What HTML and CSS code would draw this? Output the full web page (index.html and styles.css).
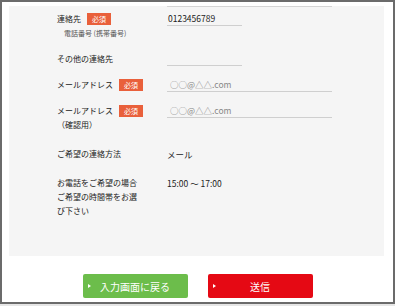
FILE: index.html
```html
<html>
<head>
    <title>お問い合わせ 確認</title>
    <link rel="stylesheet" href="styles.css">
</head>
<body>

<div class="frame">
    <div class="panel">
        <div class="prev-line"></div>

        <div class="row first">
            <div class="label">
                <div class="label-main">連絡先<span class="badge">必須</span></div>
                <div class="label-sub">電話番号 (携帯番号)</div>
            </div>
            <div class="value">
                <div class="field short">0123456789</div>
            </div>
        </div>

        <div class="row">
            <div class="label">
                <div class="label-main">その他の連絡先</div>
            </div>
            <div class="value">
                <div class="field short"></div>
            </div>
        </div>

        <div class="row">
            <div class="label">
                <div class="label-main">メールアドレス<span class="badge">必須</span></div>
            </div>
            <div class="value">
                <div class="field long placeholder">○○@△△.com</div>
            </div>
        </div>

        <div class="row">
            <div class="label">
                <div class="label-main">メールアドレス<span class="badge">必須</span></div>
                <div class="label-main">（確認用）</div>
            </div>
            <div class="value">
                <div class="field long placeholder">○○@△△.com</div>
            </div>
        </div>

        <div class="row wide">
            <div class="label">
                <div class="label-main">ご希望の連絡方法</div>
            </div>
            <div class="value">
                <div class="text">メール</div>
            </div>
        </div>

        <div class="row wide">
            <div class="label">
                <div class="label-main">お電話をご希望の場合<br>ご希望の時間帯をお選<br>び下さい</div>
            </div>
            <div class="value">
                <div class="text">15:00 〜 17:00</div>
            </div>
        </div>
    </div>

    <div class="actions">
        <button class="btn btn-back">入力画面に戻る</button>
        <button class="btn btn-send">送信</button>
    </div>
</div>

</body>
</html>
```

FILE: styles.css
```css
body {
    margin: 0;
    background-color: #e6e6e6;
    font-family: "Noto Sans CJK JP", "Noto Sans", sans-serif;
    color: #222;
}

.frame {
    background-color: #fff;
    border: 2px solid #6b6b6b;
    height: 300px;
    overflow: hidden;
}

.panel {
    background-color: #f5f5f5;
    margin: 4px 9px 0 7px;
    height: 250px;
    padding-left: 48px;
    box-sizing: border-box;
}

.prev-line {
    margin-left: 110px;
    width: 165px;
    height: 1px;
    background-color: #d4d4d4;
}

.row {
    display: grid;
    grid-template-columns: 110px 1fr;
    margin-top: 12px;
}

.row.first {
    margin-top: 5px;
}

.row.wide {
    margin-top: 15px;
}

.label-main {
    font-size: 8px;
    line-height: 14px;
    color: #222;
}

.label-sub {
    font-size: 7px;
    line-height: 14px;
    color: #555;
    padding-left: 7px;
}

.badge {
    display: inline-block;
    background-color: #e9603b;
    color: #fff;
    font-size: 7px;
    line-height: 12px;
    height: 12px;
    padding: 0 5px;
    margin-left: 6px;
    vertical-align: top;
    margin-top: 1px;
}

.field {
    height: 14px;
    box-sizing: border-box;
    border-bottom: 1px solid #cfcfcf;
    font-size: 8.5px;
    line-height: 13px;
    padding-left: 1px;
    color: #222;
}

.field.short {
    width: 75px;
}

.field.long {
    width: 165px;
}

.field.placeholder {
    color: #888;
    padding-left: 3px;
}

.text {
    font-size: 8.5px;
    line-height: 14px;
    color: #222;
}

.actions {
    display: flex;
    justify-content: center;
    gap: 20px;
    margin-top: 18px;
}

.btn {
    position: relative;
    width: 105px;
    height: 24px;
    border: none;
    border-radius: 2px;
    color: #fff;
    font-family: "Noto Sans CJK JP", "Noto Sans", sans-serif;
    font-size: 10px;
    padding: 0;
    cursor: pointer;
}

.btn::before {
    content: "";
    position: absolute;
    left: 5px;
    top: 10px;
    border-left: 3px solid #fff;
    border-top: 2px solid transparent;
    border-bottom: 2px solid transparent;
}

.btn-back {
    background-color: #6cbd4b;
}

.btn-send {
    background-color: #e50914;
}
```
